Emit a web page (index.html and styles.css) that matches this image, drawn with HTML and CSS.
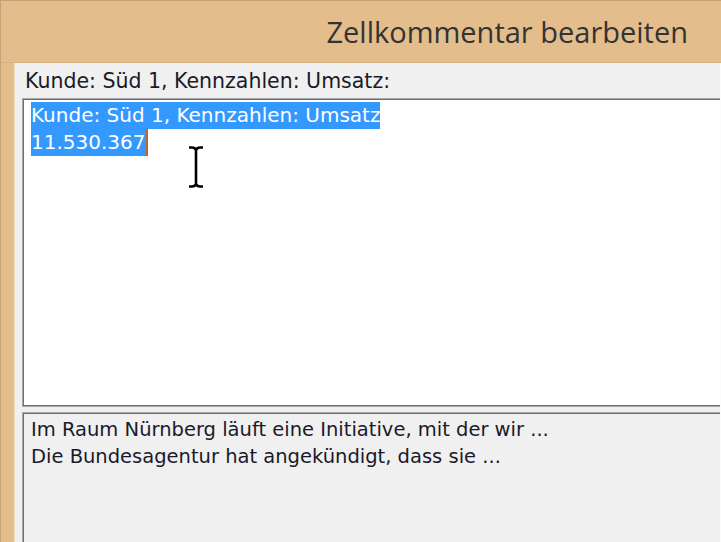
FILE: index.html
```html
<!DOCTYPE html>
<html lang="de">
<head>
<meta charset="utf-8">
<title>Zellkommentar bearbeiten</title>
<link rel="stylesheet" href="styles.css">
</head>
<body>
<div class="frame">
  <header class="titlebar">
    <h1 class="title">Zellkommentar bearbeiten</h1>
  </header>
  <main class="window">
    <div class="label">Kunde: Süd 1, Kennzahlen: Umsatz:</div>
    <div class="editor">
      <div class="line"><span class="sel">Kunde: Süd 1, Kennzahlen: Umsatz</span></div>
      <div class="line"><span class="sel">11.530.367</span><span class="caret"></span></div>
      <svg class="ibeam" width="18" height="44" viewBox="0 0 18 44" aria-hidden="true">
        <path d="M2 2.5 H5 Q8 2.5 9 5 Q10 2.5 13 2.5 H16 M9 5 V39 M2 41.5 H5 Q8 41.5 9 39 Q10 41.5 13 41.5 H16" fill="none" stroke="#000" stroke-width="2.6"/>
      </svg>
    </div>
    <div class="notes">
      <div class="note">Im Raum Nürnberg läuft eine Initiative, mit der wir ...</div>
      <div class="note">Die Bundesagentur hat angekündigt, dass sie ...</div>
    </div>
  </main>
</div>
</body>
</html>
```
FILE: styles.css
```css
html, body {
  margin: 0;
  padding: 0;
  width: 721px;
  height: 542px;
  overflow: hidden;
  background: #e3bd8b;
}

.frame {
  width: 721px;
  height: 542px;
  box-sizing: border-box;
  border-top: 1px solid #c7a274;
  border-left: 1px solid #c7a274;
  display: flex;
  flex-direction: column;
}

.titlebar {
  height: 61px;
  flex: none;
  display: flex;
  align-items: center;
  justify-content: flex-end;
  padding-right: 33px;
  border-bottom: 1px solid #d5b185;
}

.title {
  margin: 0;
  font-family: "Open Sans", "Noto Sans", sans-serif;
  font-weight: 400;
  font-size: 29px;
  color: #333;
}

.window {
  flex: 1;
  margin-left: 13px;
  background: #f0f0f0;
  border-left: 1px solid #f3dcc0;
  border-right: 1px solid #fbfbfb;
  overflow: hidden;
  display: flex;
  flex-direction: column;
  font-family: "DejaVu Sans", sans-serif;
  color: #1a1a2a;
}

.label {
  padding: 6px 0 0 10px;
  height: 29px;
  line-height: 24px;
  font-size: 20.5px;
  white-space: nowrap;
}

.editor {
  position: relative;
  margin-left: 7px;
  margin-right: -4px;
  height: 309px;
  box-sizing: border-box;
  background: #fff;
  border: 1px solid #a9a9a9;
  box-shadow: inset 0 0 0 1px #6e6e6e;
  padding: 3px 0 0 8px;
  font-size: 20px;
}

.line {
  height: 27px;
  line-height: 27px;
  display: flex;
}

.sel {
  background: #3399ff;
  color: #fff;
  white-space: pre;
}

.caret {
  width: 2px;
  height: 27px;
  background: #c0661a;
}

.ibeam {
  position: absolute;
  left: 164px;
  top: 46px;
}

.notes {
  margin-top: 5px;
  margin-left: 7px;
  margin-right: -4px;
  flex: 1;
  border: 1px solid #a9a9a9;
  border-bottom: none;
  box-shadow: inset 1px 1px 0 0 #6e6e6e;
  padding: 3px 0 0 8px;
  font-size: 19.5px;
}

.note {
  height: 27px;
  line-height: 27px;
  white-space: nowrap;
}
```
